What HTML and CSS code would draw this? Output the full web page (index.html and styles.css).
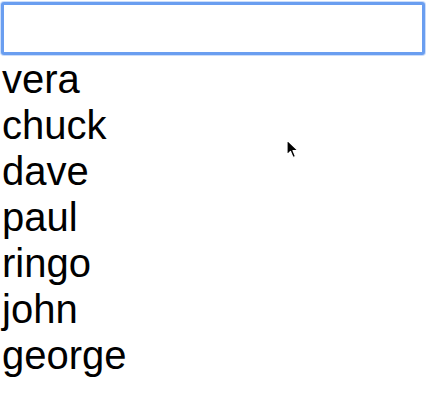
FILE: index.html
```html
<!DOCTYPE html>
<html>
<head>
<meta charset="utf-8">
<link rel="stylesheet" href="styles.css">
</head>
<body>
<div class="app">
  <input class="search" type="text">
  <ul class="names">
    <li>vera</li>
    <li>chuck</li>
    <li>dave</li>
    <li>paul</li>
    <li>ringo</li>
    <li>john</li>
    <li>george</li>
  </ul>
</div>
<svg class="cursor" width="14" height="20" viewBox="0 0 14 20">
  <path d="M1 1 L1 16 L4.5 12.5 L7 18.5 L9.5 17.5 L7 11.5 L12 11.5 Z" fill="#000" stroke="#fff" stroke-width="1.2" stroke-linejoin="round"/>
</svg>
</body>
</html>
```
FILE: styles.css
```css
html, body {
  margin: 0;
  padding: 0;
  background: #fff;
}
body {
  font-family: "Liberation Sans", Arial, sans-serif;
  position: relative;
  width: 426px;
  height: 402px;
  overflow: hidden;
}
.app {
  display: flex;
  flex-direction: column;
  padding: 2px 1px 0 1px;
}
.search {
  box-sizing: border-box;
  width: 424px;
  height: 53px;
  margin: 0 0 1px 0;
  border: 3px solid #6a9ef0;
  border-radius: 3px;
  outline: none;
  background: #fff;
  box-shadow: 0 0 0 1px rgba(106, 158, 240, 0.35);
  padding: 0 4px;
  font-size: 40px;
}
.names {
  list-style: none;
  margin: 0;
  padding: 0 0 0 1px;
  font-size: 40px;
  line-height: 46px;
  color: #000;
}
.cursor {
  position: absolute;
  left: 286px;
  top: 139px;
}
```
